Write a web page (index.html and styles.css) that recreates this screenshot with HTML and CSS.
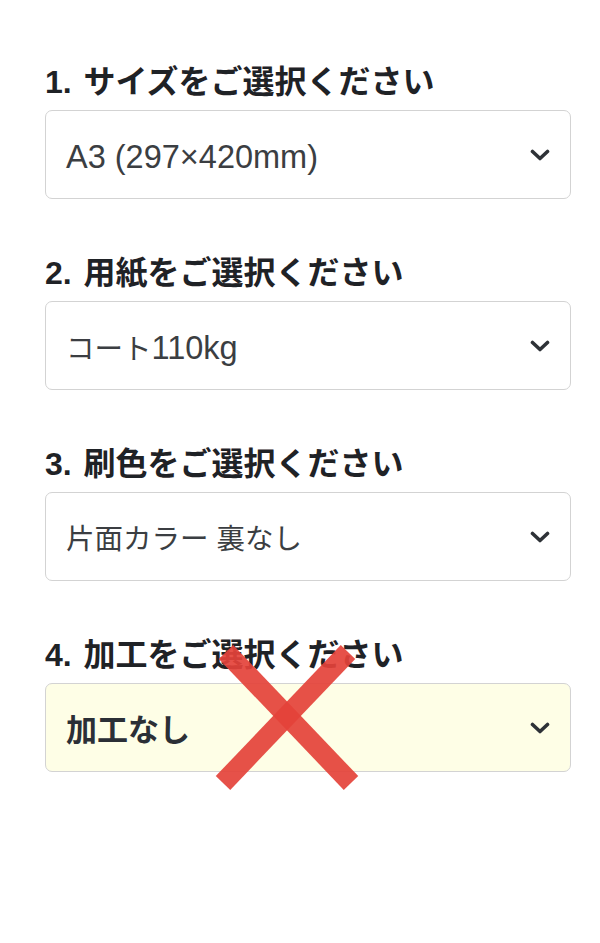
FILE: index.html
```html
<!DOCTYPE html>
<html lang="ja">
<head>
<meta charset="utf-8">
<link rel="stylesheet" href="styles.css">
</head>
<body>
<div class="page">
  <div class="group">
    <div class="label"><span class="num">1.</span> サイズをご選択ください</div>
    <div class="select">
      <span class="value"><span class="lat">A3 (297×420mm)</span></span>
      <svg class="chev" viewBox="0 0 20 12" width="20" height="12"><path d="M2.5 2.5 L10 9.5 L17.5 2.5" fill="none" stroke="#2e3237" stroke-width="3.6" stroke-linecap="round" stroke-linejoin="round"/></svg>
    </div>
  </div>
  <div class="group">
    <div class="label"><span class="num">2.</span> 用紙をご選択ください</div>
    <div class="select">
      <span class="value">コート<span class="lat">110kg</span></span>
      <svg class="chev" viewBox="0 0 20 12" width="20" height="12"><path d="M2.5 2.5 L10 9.5 L17.5 2.5" fill="none" stroke="#2e3237" stroke-width="3.6" stroke-linecap="round" stroke-linejoin="round"/></svg>
    </div>
  </div>
  <div class="group">
    <div class="label"><span class="num">3.</span> 刷色をご選択ください</div>
    <div class="select">
      <span class="value">片面カラー 裏なし</span>
      <svg class="chev" viewBox="0 0 20 12" width="20" height="12"><path d="M2.5 2.5 L10 9.5 L17.5 2.5" fill="none" stroke="#2e3237" stroke-width="3.6" stroke-linecap="round" stroke-linejoin="round"/></svg>
    </div>
  </div>
  <div class="group">
    <div class="label"><span class="num">4.</span> 加工をご選択ください</div>
    <div class="select highlight">
      <span class="value strong">加工なし</span>
      <svg class="chev" viewBox="0 0 20 12" width="20" height="12"><path d="M2.5 2.5 L10 9.5 L17.5 2.5" fill="none" stroke="#2e3237" stroke-width="3.6" stroke-linecap="round" stroke-linejoin="round"/></svg>
    </div>
  </div>
  <svg class="cross" viewBox="0 0 147 145" width="147" height="145">
    <line x1="13" y1="7" x2="138" y2="138" stroke="#e4423a" stroke-width="20" stroke-opacity="0.92"/>
    <line x1="135" y1="7" x2="10" y2="138" stroke="#e4423a" stroke-width="20" stroke-opacity="0.92"/>
  </svg>
</div>
</body>
</html>
```

FILE: styles.css
```css
html, body {
  margin: 0;
  padding: 0;
  background: #ffffff;
}

body {
  font-family: "Liberation Sans", "Noto Sans CJK JP", sans-serif;
  color: #2b2f34;
}

.page {
  position: relative;
  width: 600px;
  min-height: 943px;
  box-sizing: border-box;
  padding: 60px 29px 0 45px;
  display: flex;
  flex-direction: column;
  gap: 52px;
}

.group {
  display: flex;
  flex-direction: column;
  gap: 8px;
}

.label {
  font-size: 32px;
  font-weight: 700;
  line-height: 40px;
  padding-top: 2px;
  color: #1f2226;
  white-space: nowrap;
}

.num {
  margin-right: 3px;
}

.select {
  height: 89px;
  box-sizing: border-box;
  border: 1.5px solid #d3d3d3;
  border-radius: 7px;
  background: #ffffff;
  display: flex;
  align-items: center;
  justify-content: space-between;
  padding: 0 20px 0 20px;
}

.select.highlight {
  background: #fefee6;
}

.value {
  font-size: 28.5px;
  font-weight: 400;
  color: #3b3e42;
  line-height: 1;
  white-space: nowrap;
  margin-top: 5px;
}

.lat {
  font-size: 32.5px;
}

.value.strong {
  font-size: 31px;
  font-weight: 700;
  color: #2b2f36;
}

.chev {
  display: block;
  flex: none;
}

.cross {
  position: absolute;
  left: 213px;
  top: 645px;
  overflow: visible;
}
```
